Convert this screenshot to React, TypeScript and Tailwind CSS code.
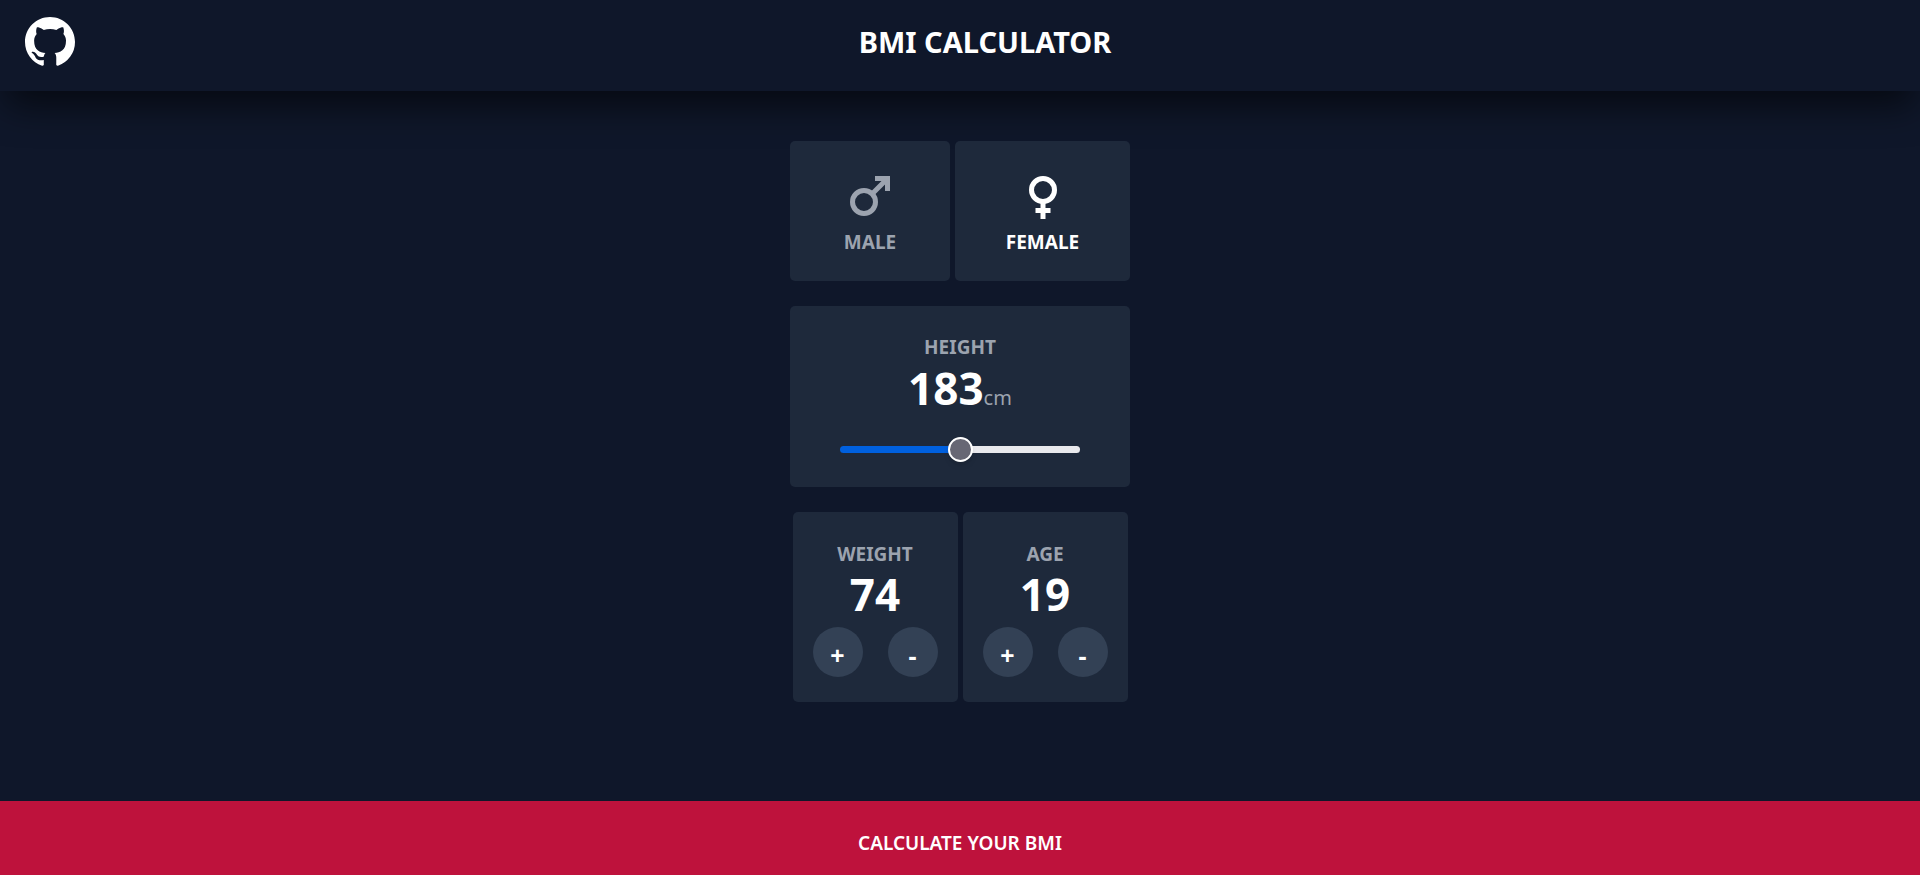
import { useState } from "react";
import type { ReactNode } from "react";
import { BsGithub } from "react-icons/bs";

type Gender = "male" | "female";

const MIN_HEIGHT = 100;
const MAX_HEIGHT = 266;

function MaleIcon() {
  return (
    <svg viewBox="0 0 40 40" className="h-[40px] w-[40px]" fill="none" stroke="currentColor" strokeWidth="5" aria-hidden="true">
      <circle cx="14" cy="26" r="11.5" />
      <path d="M22 18L36 4M25 2.5H37.5V15" />
    </svg>
  );
}

function FemaleIcon() {
  return (
    <svg viewBox="0 0 28 43" className="h-[43px] w-[28px]" fill="none" stroke="currentColor" strokeWidth="5" aria-hidden="true">
      <circle cx="14" cy="14" r="11.5" />
      <path d="M14 25V43M6.5 34.5H21.5" />
    </svg>
  );
}

function GenderButton({
  label,
  icon,
  active,
  onSelect,
  size,
}: {
  label: string;
  icon: ReactNode;
  active: boolean;
  onSelect: () => void;
  size: string;
}) {
  return (
    <button
      type="button"
      aria-pressed={active}
      onClick={onSelect}
      className={`flex flex-col items-center rounded-[5px] bg-[#1e293b] pt-[35px] pb-[24px] ${size} ${
        active ? "text-white" : "text-[#9ca3af]"
      }`}
    >
      <span className="flex h-[51px] items-start">{icon}</span>
      <span className="text-[19px] leading-[30px] font-bold">{label}</span>
    </button>
  );
}

function Counter({
  label,
  value,
  onChange,
}: {
  label: string;
  value: number;
  onChange: (next: number) => void;
}) {
  const buttonStyle =
    "flex size-[50px] items-center justify-center rounded-full bg-[#334155] pt-[6px] text-[25px] leading-[30px] font-bold text-white";
  return (
    <section className="flex w-[165px] flex-col items-center rounded-[5px] bg-[#1e293b] pt-[27px] pb-[25px]">
      <h2 className="text-[19px] leading-[30px] font-bold text-[#9ca3af]">{label}</h2>
      <output className="text-[44px] leading-[50px] font-bold text-white">{value}</output>
      <div className="mt-[8px] flex gap-[25px]">
        <button
          type="button"
          aria-label={`Increase ${label}`}
          className={buttonStyle}
          onClick={() => onChange(value + 1)}
        >
          +
        </button>
        <button
          type="button"
          aria-label={`Decrease ${label}`}
          className={buttonStyle}
          onClick={() => onChange(Math.max(1, value - 1))}
        >
          -
        </button>
      </div>
    </section>
  );
}

export default function App() {
  const [gender, setGender] = useState<Gender>("female");
  const [height, setHeight] = useState(183);
  const [weight, setWeight] = useState(74);
  const [age, setAge] = useState(19);
  const progress = ((height - MIN_HEIGHT) / (MAX_HEIGHT - MIN_HEIGHT)) * 100;

  return (
    <div className="flex min-h-screen flex-col bg-[#0f172a] font-['Noto_Sans','Open_Sans',sans-serif]">
      <header className="flex items-start px-[25px] pt-[17px] pb-[24px] shadow-[0_20px_36px_-6px_rgba(0,0,0,0.6)]">
        <a href="https://github.com" aria-label="GitHub" className="text-white">
          <BsGithub className="size-[50px]" />
        </a>
        <h1 className="grow pt-[5px] text-center text-[29px] leading-[40px] font-bold text-white">
          BMI CALCULATOR
        </h1>
      </header>

      <main className="flex grow flex-col items-center gap-[25px] pt-[50px]">
        <div className="flex gap-[5px]">
          <GenderButton
            label="MALE"
            size="w-[160px]"
            icon={<MaleIcon />}
            active={gender === "male"}
            onSelect={() => setGender("male")}
          />
          <GenderButton
            label="FEMALE"
            size="w-[175px]"
            icon={<FemaleIcon />}
            active={gender === "female"}
            onSelect={() => setGender("female")}
          />
        </div>

        <section className="flex w-[340px] flex-col items-center rounded-[5px] bg-[#1e293b] px-[50px] pt-[26px] pb-[25px]">
          <label htmlFor="height" className="text-[19px] leading-[30px] font-bold text-[#9ca3af]">
            HEIGHT
          </label>
          <p className="mt-px flex items-baseline text-[#9ca3af]">
            <span className="text-[44px] leading-[50px] font-bold text-white">{height}</span>
            <span className="text-[20px] leading-[20px]">cm</span>
          </p>
          <input
            id="height"
            type="range"
            min={MIN_HEIGHT}
            max={MAX_HEIGHT}
            value={height}
            onChange={(event) => setHeight(Number(event.target.value))}
            style={{
              backgroundImage: `linear-gradient(to right, #0060df ${progress}%, #e9e9ed ${progress}%)`,
            }}
            className="mt-[33px] mb-[9px] h-[7px] w-full appearance-none rounded-full [&::-webkit-slider-thumb]:size-[25px] [&::-webkit-slider-thumb]:appearance-none [&::-webkit-slider-thumb]:rounded-full [&::-webkit-slider-thumb]:border-2 [&::-webkit-slider-thumb]:border-solid [&::-webkit-slider-thumb]:border-white [&::-webkit-slider-thumb]:bg-[#676774] [&::-webkit-slider-thumb]:shadow-md"
          />
        </section>

        <div className="flex gap-[5px]">
          <Counter label="WEIGHT" value={weight} onChange={setWeight} />
          <Counter label="AGE" value={age} onChange={setAge} />
        </div>
      </main>

      <button
        type="button"
        className="w-full bg-[#be123c] pt-[27px] pb-[17px] text-[19px] leading-[30px] font-semibold text-white"
      >
        CALCULATE YOUR BMI
      </button>
    </div>
  );
}
